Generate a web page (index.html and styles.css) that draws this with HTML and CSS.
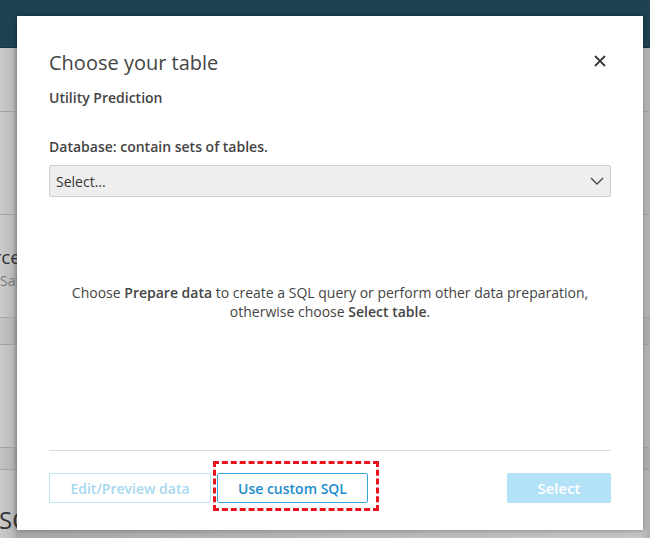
FILE: index.html
```html
<!DOCTYPE html>
<html lang="en">
<head>
<meta charset="utf-8">
<title>Choose your table</title>
<link rel="stylesheet" href="styles.css">
</head>
<body>
<div class="app">
  <header class="topbar"></header>
  <main class="workspace">
    <div class="row r1"></div>
    <div class="row r2"></div>
    <div class="row r3"><div class="card-title"><span>Source</span></div><div class="card-sub">Sales</div></div>
    <div class="row r4"></div>
    <div class="row r5"></div>
    <div class="row r6"></div>
    <div class="row r7"><div class="card-big">SCHEMA</div></div>
  </main>

  <section class="modal" role="dialog" aria-labelledby="dlg-title">
    <div class="modal-head">
      <h2 id="dlg-title" class="modal-title">Choose your table</h2>
      <button class="close" aria-label="Close">
        <svg width="12" height="12" viewBox="0 0 12 12"><path d="M1 1L11 11M11 1L1 11" stroke="#3a3a3a" stroke-width="1.8" fill="none"/></svg>
      </button>
    </div>
    <p class="subtitle">Utility Prediction</p>
    <label class="field-label">Database: contain sets of tables.</label>
    <div class="select">
      <span>Select...</span>
      <svg width="14" height="8" viewBox="0 0 14 8"><path d="M1 1L7 7L13 1" stroke="#444" stroke-width="1.4" fill="none"/></svg>
    </div>
    <div class="message">
      <p>Choose <b>Prepare data</b> to create a SQL query or perform other data preparation,<br>otherwise choose <b>Select table</b>.</p>
    </div>
    <div class="footer">
      <div class="left-btns">
        <button class="btn btn-disabled">Edit/Preview data</button>
        <span class="highlight"><button class="btn btn-outline">Use custom SQL</button></span>
      </div>
      <button class="btn btn-primary-disabled">Select</button>
    </div>
  </section>
</div>
</body>
</html>
```

FILE: styles.css
```css
* { box-sizing: border-box; }
html, body { margin: 0; padding: 0; }
body {
  width: 650px;
  height: 538px;
  overflow: hidden;
  font-family: "Open Sans", "Liberation Sans", sans-serif;
  color: #444;
  background: #bdbdbd;
}
.app {
  position: relative;
  width: 650px;
  height: 538px;
  overflow: hidden;
}
.topbar {
  height: 48px;
  background: #1f4252;
  border-bottom: 1px solid #173441;
}
.workspace {
  display: flex;
  flex-direction: column;
  height: 490px;
  background: linear-gradient(to right, #cbcbcb 0, #bcbcbc 12px, #a9a9a9 17px, #c6c6c6 640px, #b0b0b0 650px);
}
.row {
  border-bottom: 1px solid #a4a4a4;
  overflow: hidden;
  white-space: nowrap;
}
.r1 { height: 64px; }
.r2 { height: 103px; }
.r3 { height: 103px; padding-top: 31px; }
.r4 { height: 27px; background: rgba(0,0,0,0.03); }
.r5 { height: 103px; }
.r6 { height: 22px; background: rgba(0,0,0,0.03); }
.r7 { flex: 1; border-bottom: 0; padding-top: 36px; }
.card-title {
  width: 21px;
  display: flex;
  justify-content: flex-end;
  font-size: 19px;
  color: #333;
  line-height: 22px;
}
.card-sub {
  font-size: 14px;
  color: #7a7a7a;
  line-height: 20px;
  margin-top: 3px;
}
.card-big {
  font-size: 24px;
  line-height: 28px;
  color: #333;
  margin-left: -1px;
}

.modal {
  position: absolute;
  top: 16px;
  left: 17px;
  width: 626px;
  height: 514px;
  background: #fff;
  box-shadow: 0 0 6px rgba(0,0,0,0.35);
  padding: 33px 32px 0 32px;
  display: flex;
  flex-direction: column;
}
.modal-head {
  display: flex;
  justify-content: space-between;
  align-items: flex-start;
}
.modal-title {
  margin: 0;
  font-size: 20px;
  line-height: 28px;
  font-weight: 400;
  color: #444;
}
.close {
  background: none;
  border: 0;
  padding: 0;
  margin-top: 6px;
  margin-right: 5px;
  width: 12px;
  height: 12px;
  display: flex;
}
.subtitle {
  margin: 11px 0 0;
  font-size: 14px;
  line-height: 20px;
  font-weight: 600;
  color: #444;
}
.field-label {
  display: block;
  margin-top: 29px;
  font-size: 14px;
  line-height: 20px;
  font-weight: 600;
  color: #444;
}
.select {
  margin-top: 8px;
  height: 32px;
  background: #eeeeee;
  border: 1px solid #cfcfcf;
  border-radius: 2px;
  display: flex;
  align-items: center;
  justify-content: space-between;
  padding: 0 6px 0 6px;
  font-size: 14px;
  color: #333;
}
.message {
  height: 254px;
  display: flex;
  align-items: center;
  justify-content: center;
  text-align: center;
  border-bottom: 1px solid #dcdcdc;
  padding-bottom: 43px;
}
.message p {
  margin: 0;
  font-size: 14px;
  line-height: 19px;
  color: #444;
}
.message b { font-weight: 600; }
.footer {
  margin-top: 22px;
  display: flex;
  justify-content: space-between;
  align-items: center;
}
.left-btns {
  display: flex;
  gap: 6px;
}
.btn {
  height: 30px;
  font-family: inherit;
  font-size: 14px;
  font-weight: 600;
  border-radius: 2px;
  padding: 0;
  background: #fff;
  cursor: pointer;
}
.btn-disabled {
  width: 162px;
  border: 1px solid #bfe4f6;
  color: #a6d7f0;
}
.highlight {
  position: relative;
  display: inline-flex;
}
.highlight::after {
  content: "";
  position: absolute;
  top: -12px;
  left: -4px;
  right: -11px;
  bottom: -8px;
  border: 3px dashed #e8131b;
  pointer-events: none;
}
.btn-outline {
  width: 151px;
  border: 1px solid #3aa6de;
  color: #1d8ccc;
}
.btn-primary-disabled {
  width: 104px;
  border: 1px solid #b3e1f6;
  background: #b3e1f6;
  color: #fff;
  font-size: 15px;
}
```
